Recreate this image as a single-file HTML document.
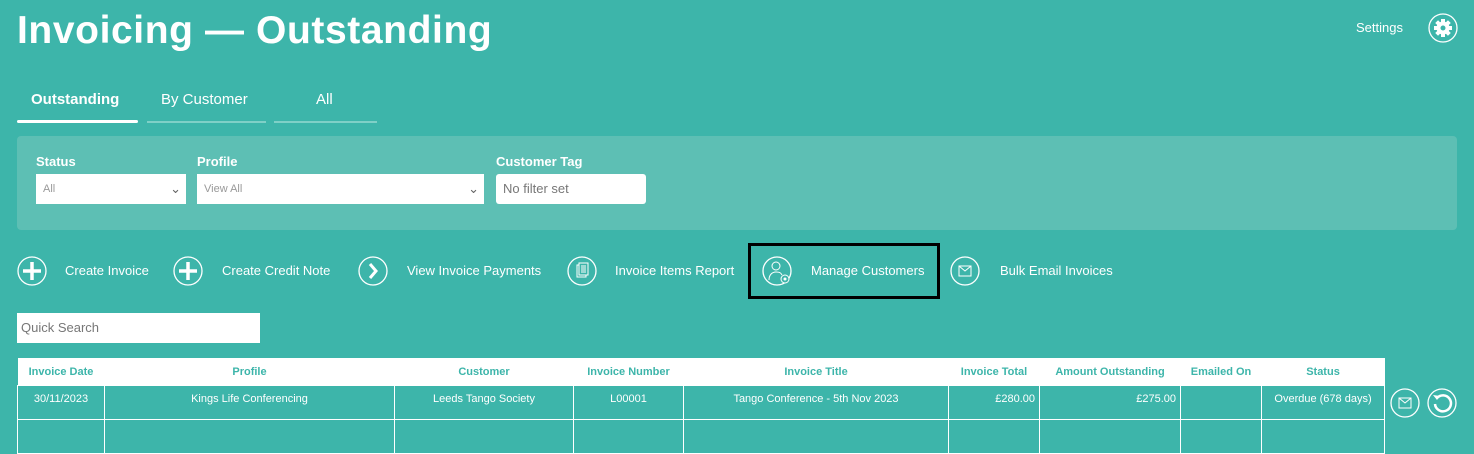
<!DOCTYPE html><html><head><style>
body{margin:0;width:1474px;height:425px;background:#3db5aa;font-family:"Liberation Sans",sans-serif;color:#fff;position:relative;overflow:hidden}
.a{position:absolute}
h1{position:absolute;left:17px;top:9px;margin:0;font-size:39px;font-weight:bold;letter-spacing:0.6px}
.tab{position:absolute;top:91px;font-size:15px}
.ul{position:absolute;top:121px;height:2px;background:#7fd0c7}
.panel{position:absolute;left:17px;top:136px;width:1440px;height:94px;background:#5dbfb4;border-radius:4px}
.lbl{position:absolute;top:154px;font-size:13px;font-weight:bold}
.sel{position:absolute;top:174px;height:30px;background:#fff;color:#999;font-size:11px;line-height:30px;padding-left:7px;box-sizing:border-box}
.act{position:absolute;top:261px;font-size:13px;line-height:20px}
.ic{position:absolute;top:256px}
table{position:absolute;left:17px;top:358px;width:1368px;border-collapse:collapse;font-size:11px}
th{background:#fff;color:#3db5aa;height:27px;font-weight:bold;padding:0}
td{border:1px solid #fff;height:33px;text-align:center;padding:0 4px;vertical-align:top;line-height:26px}
</style></head><body>
<h1>Invoicing — Outstanding</h1>
<div class="a" style="left:1356px;top:20px;font-size:13px">Settings</div>
<svg class="a" style="left:1428px;top:13px" width="30" height="30" viewBox="0 0 30 30"><circle cx="15" cy="15" r="14" fill="none" stroke="#fff" stroke-width="1.3"/><g fill="#fff"><circle cx="15" cy="15" r="6.5"/><rect x="13" y="6" width="4" height="18"/><rect x="6" y="13" width="18" height="4"/><rect x="13" y="6" width="4" height="18" transform="rotate(45 15 15)"/><rect x="13" y="6" width="4" height="18" transform="rotate(-45 15 15)"/></g><circle cx="15" cy="15" r="2.5" fill="#3db5aa"/></svg>
<div class="tab" style="left:31px;font-weight:bold">Outstanding</div>
<div class="tab" style="left:161px">By Customer</div>
<div class="tab" style="left:316px">All</div>
<div class="ul" style="left:17px;width:121px;height:3px;background:#fff;top:120px;border-radius:2px"></div>
<div class="ul" style="left:147px;width:119px"></div>
<div class="ul" style="left:274px;width:103px"></div>
<div class="panel"></div>
<div class="lbl" style="left:36px">Status</div>
<div class="lbl" style="left:197px">Profile</div>
<div class="lbl" style="left:496px">Customer Tag</div>
<div class="sel" style="left:36px;width:150px">All<span class="a" style="right:5px;top:0;color:#666;font-size:13px">⌄</span></div>
<div class="sel" style="left:197px;width:287px">View All<span class="a" style="right:5px;top:0;color:#666;font-size:13px">⌄</span></div>
<div class="sel" style="left:496px;width:150px;border-radius:3px;color:#777;font-size:13px">No filter set</div>

<svg class="ic" style="left:17px" width="30" height="30"><circle cx="15" cy="15" r="14" fill="none" stroke="#fff" stroke-width="1.3"/><path d="M15 6v18M6 15h18" stroke="#fff" stroke-width="3.5"/></svg>
<div class="act" style="left:65px">Create Invoice</div>
<svg class="ic" style="left:173px" width="30" height="30"><circle cx="15" cy="15" r="14" fill="none" stroke="#fff" stroke-width="1.3"/><path d="M15 6v18M6 15h18" stroke="#fff" stroke-width="3.5"/></svg>
<div class="act" style="left:222px">Create Credit Note</div>
<svg class="ic" style="left:358px" width="30" height="30"><circle cx="15" cy="15" r="14" fill="none" stroke="#fff" stroke-width="1.3"/><path d="M12 8l6 7-6 7" fill="none" stroke="#fff" stroke-width="3"/></svg>
<div class="act" style="left:407px">View Invoice Payments</div>
<svg class="ic" style="left:567px" width="30" height="30"><circle cx="15" cy="15" r="14" fill="none" stroke="#fff" stroke-width="1.3"/><rect x="10" y="9" width="9" height="12" fill="none" stroke="#fff"/><rect x="12" y="7" width="9" height="12" fill="#3db5aa" stroke="#fff"/><path d="M14 10h5M14 12h5M14 14h5M14 16h5" stroke="#fff"/></svg>
<div class="act" style="left:615px">Invoice Items Report</div>
<div class="a" style="left:748px;top:243px;width:186px;height:50px;border:3px solid #000;box-sizing:content-box"></div>
<svg class="ic" style="left:762px" width="32" height="32"><circle cx="15" cy="15" r="14" fill="none" stroke="#fff" stroke-width="1.3"/><circle cx="14" cy="10" r="4" fill="none" stroke="#fff"/><path d="M7 24c0-5 3-8 7-8s5 1 6 3" fill="none" stroke="#fff"/><circle cx="23" cy="23" r="4" fill="#3db5aa" stroke="#fff"/><circle cx="23" cy="23" r="1.5" fill="#fff"/></svg>
<div class="act" style="left:811px">Manage Customers</div>
<svg class="ic" style="left:950px" width="30" height="30"><circle cx="15" cy="15" r="14" fill="none" stroke="#fff" stroke-width="1.3"/><rect x="9" y="10" width="12" height="10" fill="none" stroke="#fff"/><path d="M9 10l6 5 6-5" fill="none" stroke="#fff"/></svg>
<div class="act" style="left:1000px">Bulk Email Invoices</div>

<div class="a" style="left:17px;top:313px;width:243px;height:30px;background:#fff;color:#777;font-size:13px;line-height:30px;padding-left:4px;box-sizing:border-box">Quick Search</div>
<table><tr><th style="width:87px">Invoice Date</th><th style="width:290px">Profile</th><th style="width:179px">Customer</th><th style="width:110px">Invoice Number</th><th style="width:265px">Invoice Title</th><th style="width:91px">Invoice Total</th><th style="width:141px">Amount Outstanding</th><th style="width:81px">Emailed On</th><th>Status</th></tr>
<tr><td>30/11/2023</td><td>Kings Life Conferencing</td><td>Leeds Tango Society</td><td>L00001</td><td>Tango Conference - 5th Nov 2023</td><td style="text-align:right">£280.00</td><td style="text-align:right">£275.00</td><td></td><td>Overdue (678 days)</td></tr>
<tr><td></td><td></td><td></td><td></td><td></td><td></td><td></td><td></td><td></td></tr></table>
<svg class="a" style="left:1390px;top:387px" width="70" height="32"><circle cx="15" cy="16" r="14" fill="none" stroke="#fff" stroke-width="1.3"/><rect x="9" y="11" width="12" height="10" fill="none" stroke="#fff"/><path d="M9 11l6 5 6-5" fill="none" stroke="#fff"/><circle cx="52" cy="16" r="14" fill="none" stroke="#fff" stroke-width="1.3"/><path d="M47 11a8 8 0 1 1-2 6" fill="none" stroke="#fff" stroke-width="2.5"/><path d="M43 8l4 5 3-4z" fill="#fff"/></svg>
</body></html>
